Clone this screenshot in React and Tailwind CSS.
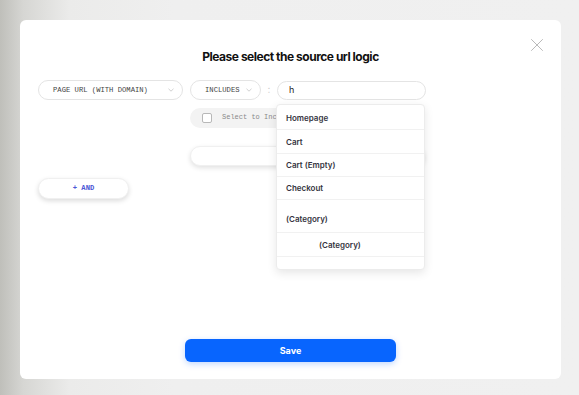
import { X } from "lucide-react";

function Chevron() {
  return (
    <svg width="6" height="4" viewBox="0 0 6 4" fill="none">
      <path d="M0.5 0.8 L3 3.2 L5.5 0.8" stroke="#c4c4c4" strokeWidth="0.8" />
    </svg>
  );
}

const mono = { fontFamily: "'Liberation Mono', 'DejaVu Sans Mono', monospace" };

const options = [
  { label: "Homepage", h: "h-[24px]" },
  { label: "Cart", h: "h-[24px]" },
  { label: "Cart (Empty)", h: "h-[23px]" },
  { label: "Checkout", h: "h-[23px]" },
];

export default function App() {
  return (
    <div
      className="h-[395px] w-[579px] overflow-hidden bg-[linear-gradient(90deg,#bfbfba_0%,#d6d6d3_4%,#ebebea_12%,#efefef_30%,#f0f0f0_100%)] pl-[20px] pt-[20px]"
      style={{ fontFamily: "Inter, 'Liberation Sans', sans-serif" }}
    >
      <div className="relative flex h-[359px] w-[541px] flex-col rounded-[6px] bg-white">
        <button className="absolute left-[506px] top-[14px] text-[#b3b3b3]">
          <X size={22} strokeWidth={1} />
        </button>

        <h1 className="pt-[29px] text-center text-[12px] font-bold leading-[16px] tracking-[-0.04em] text-[#111]">
          Please select the source url logic
        </h1>

        <div className="mt-[15px] px-[18px]">
          <div className="flex items-center">
            <div className="flex h-[20px] w-[145px] items-center justify-between rounded-full border border-[#e4e4e4] pl-[14px] pr-[8px]">
              <span className="text-[7.2px] text-[#444]" style={mono}>
                PAGE URL (WITH DOMAIN)
              </span>
              <Chevron />
            </div>
            <div className="ml-[7px] flex h-[20px] w-[71px] items-center justify-between rounded-full border border-[#e4e4e4] pl-[14px] pr-[8px]">
              <span className="text-[7.2px] text-[#444]" style={mono}>
                INCLUDES
              </span>
              <Chevron />
            </div>
            <div className="-mt-[3px] flex w-[16px] justify-center text-[10px] leading-none text-[#cfcfcf]">:</div>
            <div className="flex h-[19px] w-[149px] items-center rounded-full border border-[#e4e4e4] pl-[11px] text-[9px] text-[#222]">
              h
            </div>
          </div>

          <div className="ml-[152px] mt-[7.5px] flex h-[20px] w-[235px] items-center rounded-full bg-[#f3f3f3] pl-[12px]">
            <span className="h-[10px] w-[10px] rounded-[2px] border border-[#b8b8b8] bg-white" />
            <span className="ml-[10px] text-[7px] text-[#8a8a8a]" style={mono}>
              Select to Include all pages
            </span>
          </div>

          <div className="ml-[152px] mt-[18.5px] h-[20px] w-[235px] rounded-full border border-[#f0f0f0] bg-white shadow-[0_2px_5px_rgba(0,0,0,0.12)]" />

          <button className="mt-[12px] flex h-[21px] w-[91px] items-center justify-center rounded-full border border-[#f0f0f0] bg-white text-[7.2px] font-bold text-[#4b57d6] shadow-[0_2px_5px_rgba(0,0,0,0.14)]" style={mono}>
            + AND
          </button>
        </div>

        <div className="absolute left-[256px] top-[84px] flex h-[166px] w-[149px] flex-col overflow-hidden rounded-[4px] border border-[#ececec] bg-white pt-[1px] shadow-[0_3px_10px_rgba(0,0,0,0.10)]">
          {options.map((o) => (
            <div
              key={o.label}
              className={`${o.h} flex items-center border-b border-[#f1f1f1] pl-[9px] text-[8px] font-semibold text-[#34343e]`}
            >
              {o.label}
            </div>
          ))}
          <div className="flex h-[33px] items-end border-b border-[#f1f1f1] pb-[7px] pl-[9px] text-[8px] font-semibold text-[#34343e]">
            (Category)
          </div>
          <div className="flex h-[24px] items-center border-b border-[#f1f1f1] pl-[42px] text-[8px] font-semibold text-[#34343e]">
            (Category)
          </div>
        </div>

        <button className="mb-[17px] mt-auto h-[23px] w-[211px] self-center rounded-[6px] bg-[#0865fe] text-[9px] font-bold text-white shadow-[0_2px_6px_rgba(8,101,254,0.25)]">
          Save
        </button>
      </div>
    </div>
  );
}
